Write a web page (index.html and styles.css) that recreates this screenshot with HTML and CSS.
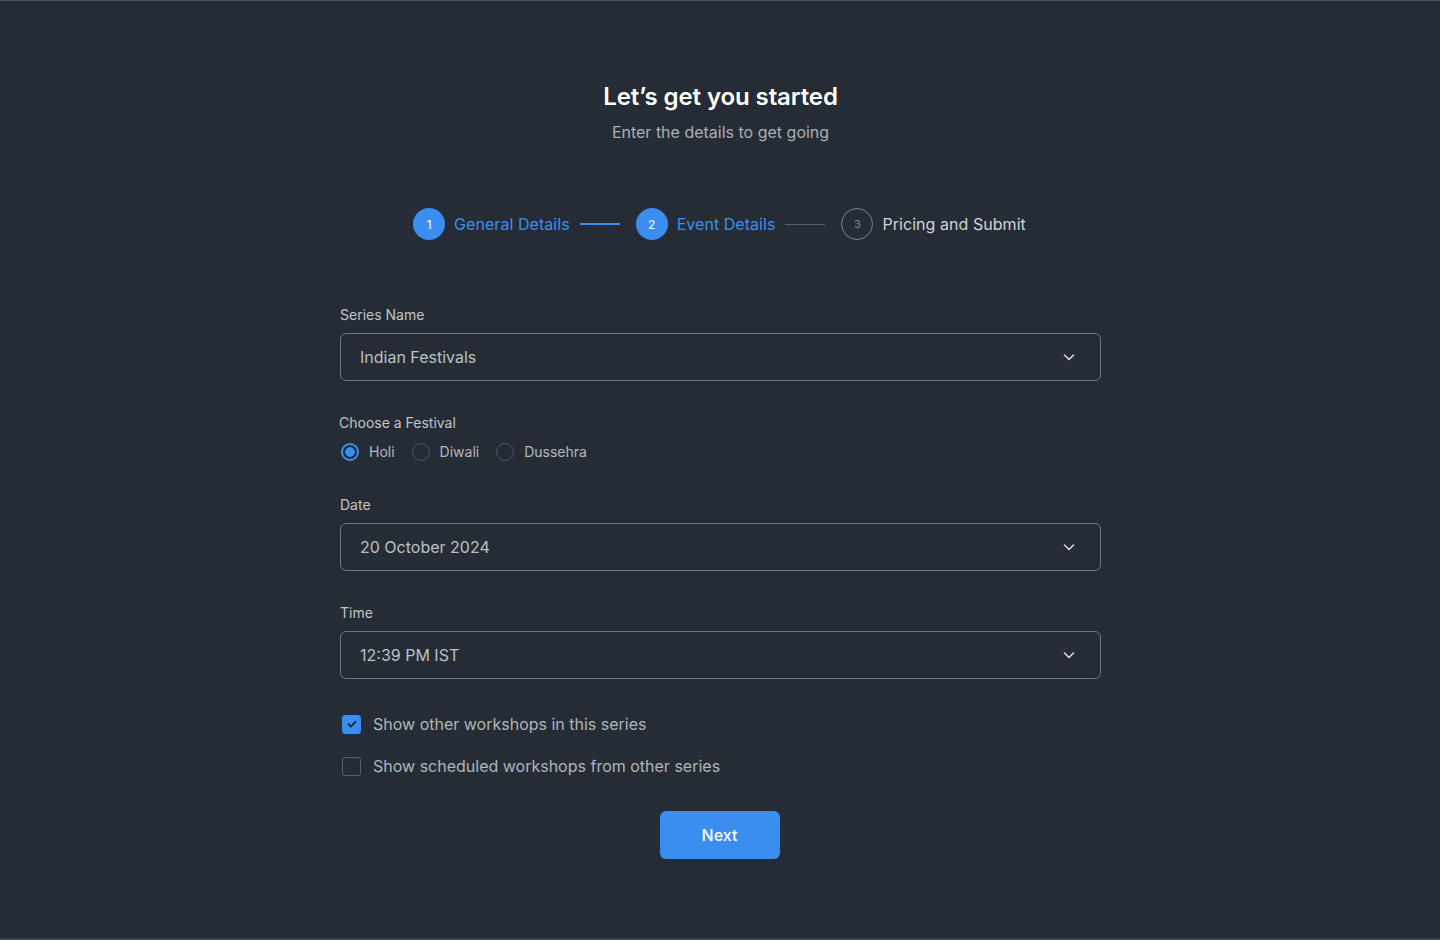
FILE: index.html
```html
<!DOCTYPE html>
<html lang="en">
<head>
<meta charset="utf-8">
<title>Let's get you started</title>
<link rel="stylesheet" href="styles.css">
</head>
<body>
<main class="page">
  <header class="head">
    <h1 class="title">Let’s get you started</h1>
    <p class="subtitle">Enter the details to get going</p>
  </header>

  <nav class="stepper">
    <div class="step active"><span class="num">1</span><span class="label">General Details</span></div>
    <span class="connector blue"></span>
    <div class="step active"><span class="num">2</span><span class="label">Event Details</span></div>
    <span class="connector grey"></span>
    <div class="step todo"><span class="num">3</span><span class="label">Pricing and Submit</span></div>
  </nav>

  <form class="form">
    <div class="field">
      <label class="flabel">Series Name</label>
      <div class="select"><span>Indian Festivals</span>
        <svg class="chev" width="16" height="16" viewBox="0 0 16 16"><path d="M3.5 6l4.5 4.5L12.5 6" fill="none" stroke="#d6d9dd" stroke-width="1.6" stroke-linecap="round" stroke-linejoin="round"/></svg>
      </div>
    </div>

    <div class="field radios-field">
      <label class="flabel tight">Choose a Festival</label>
      <div class="radios">
        <span class="radio on"><span class="dot"></span>Holi</span>
        <span class="radio"><span class="dot"></span>Diwali</span>
        <span class="radio"><span class="dot"></span>Dussehra</span>
      </div>
    </div>

    <div class="field">
      <label class="flabel">Date</label>
      <div class="select"><span>20 October 2024</span>
        <svg class="chev" width="16" height="16" viewBox="0 0 16 16"><path d="M3.5 6l4.5 4.5L12.5 6" fill="none" stroke="#d6d9dd" stroke-width="1.6" stroke-linecap="round" stroke-linejoin="round"/></svg>
      </div>
    </div>

    <div class="field">
      <label class="flabel">Time</label>
      <div class="select"><span>12:39 PM IST</span>
        <svg class="chev" width="16" height="16" viewBox="0 0 16 16"><path d="M3.5 6l4.5 4.5L12.5 6" fill="none" stroke="#d6d9dd" stroke-width="1.6" stroke-linecap="round" stroke-linejoin="round"/></svg>
      </div>
    </div>

    <div class="checks">
      <div class="check on"><span class="box"><svg width="12" height="12" viewBox="0 0 12 12"><path d="M2.5 6.2l2.4 2.4L9.6 3.6" fill="none" stroke="#1d2630" stroke-width="1.8" stroke-linecap="round" stroke-linejoin="round"/></svg></span>Show other workshops in this series</div>
      <div class="check"><span class="box"></span>Show scheduled workshops from other series</div>
    </div>

    <div class="actions"><button type="button" class="btn">Next</button></div>
  </form>
</main>
</body>
</html>
```
FILE: styles.css
```css
html, body {
  margin: 0;
  padding: 0;
}
body {
  background: #252c35;
  font-family: Inter, "Noto Sans", sans-serif;
  color: #c9cdd2;
  height: 940px;
  box-sizing: border-box;
  border-top: 1px solid #4b5159;
  border-bottom: 2px solid #3d444c;
  overflow: hidden;
}
.page {
  width: 761px;
  margin: 0 auto;
  padding-left: 1px;
  display: flex;
  flex-direction: column;
}
.head {
  text-align: center;
  margin-top: 80px;
}
.title {
  margin: 0;
  font-size: 24px;
  line-height: 32px;
  font-weight: 600;
  color: #ffffff;
  letter-spacing: -0.1px;
}
.subtitle {
  margin: 7px 0 0;
  font-size: 16px;
  line-height: 24px;
  color: #aab0b7;
}
.stepper {
  margin-top: 64px;
  display: flex;
  align-items: center;
  justify-content: center;
  margin-left: -2px;
}
.step {
  display: flex;
  align-items: center;
  gap: 9px;
}
.num {
  width: 32px;
  height: 32px;
  border-radius: 50%;
  display: flex;
  align-items: center;
  justify-content: center;
  font-size: 12px;
  box-sizing: border-box;
}
.step.active .num {
  background: #3b8ef0;
  color: #ffffff;
}
.step.todo .num {
  border: 1px solid #7d838a;
  color: #80868d;
  font-size: 11px;
}
.label {
  font-size: 16px;
  line-height: 24px;
  letter-spacing: 0.05px;
}
.step.active .label { color: #3d8fec; }
.step.todo .label { color: #d0d3d7; }
.connector {
  width: 40px;
  height: 2px;
  margin: 0 16px 0 10px;
}
.connector.blue { background: #3b8ef0; }
.connector.grey { background: #5a6067; height: 1px; }

.form {
  margin-top: 65px;
  display: flex;
  flex-direction: column;
}
.field {
  display: flex;
  flex-direction: column;
  margin-bottom: 32px;
}
.flabel {
  font-size: 14px;
  line-height: 20px;
  color: #c0c4c9;
  margin-bottom: 8px;
}
.flabel.tight {
  margin-bottom: 10px;
  margin-left: -1px;
}
.select {
  height: 48px;
  box-sizing: border-box;
  border: 1px solid #70767d;
  border-radius: 6px;
  display: flex;
  align-items: center;
  justify-content: space-between;
  padding: 0 23px 0 19px;
  font-size: 16px;
  color: #bcc0c5;
}
.radios-field { margin-bottom: 34px; }
.radios {
  display: flex;
  align-items: center;
  gap: 17px;
  font-size: 14px;
  color: #b3b8be;
  padding-left: 1px;
}
.radio {
  display: flex;
  align-items: center;
  gap: 10px;
  line-height: 18px;
}
.dot {
  width: 18px;
  height: 18px;
  box-sizing: border-box;
  border-radius: 50%;
  border: 1.5px solid #50575f;
  display: inline-block;
}
.radio.on .dot {
  border: 2px solid #3b8ef0;
  background: radial-gradient(circle, #3b8ef0 0 4.5px, transparent 5px);
}
.checks {
  margin-top: 1px;
  display: flex;
  flex-direction: column;
  gap: 18px;
  padding-left: 2px;
}
.check {
  display: flex;
  align-items: center;
  gap: 12px;
  font-size: 16px;
  line-height: 24px;
  color: #b0b5bb;
}
.box {
  width: 19px;
  height: 19px;
  box-sizing: border-box;
  border-radius: 3px;
  border: 1.5px solid #5b6168;
  display: flex;
  align-items: center;
  justify-content: center;
}
.check.on .box {
  background: #3b8ef0;
  border-color: #3b8ef0;
}
.actions {
  display: flex;
  justify-content: center;
  margin-top: 33px;
  padding-right: 2px;
}
.btn {
  width: 120px;
  height: 48px;
  border: 0;
  border-radius: 6px;
  background: #3b8ef0;
  color: #ffffff;
  font-family: Inter, "Noto Sans", sans-serif;
  font-size: 16px;
  font-weight: 500;
}
```
